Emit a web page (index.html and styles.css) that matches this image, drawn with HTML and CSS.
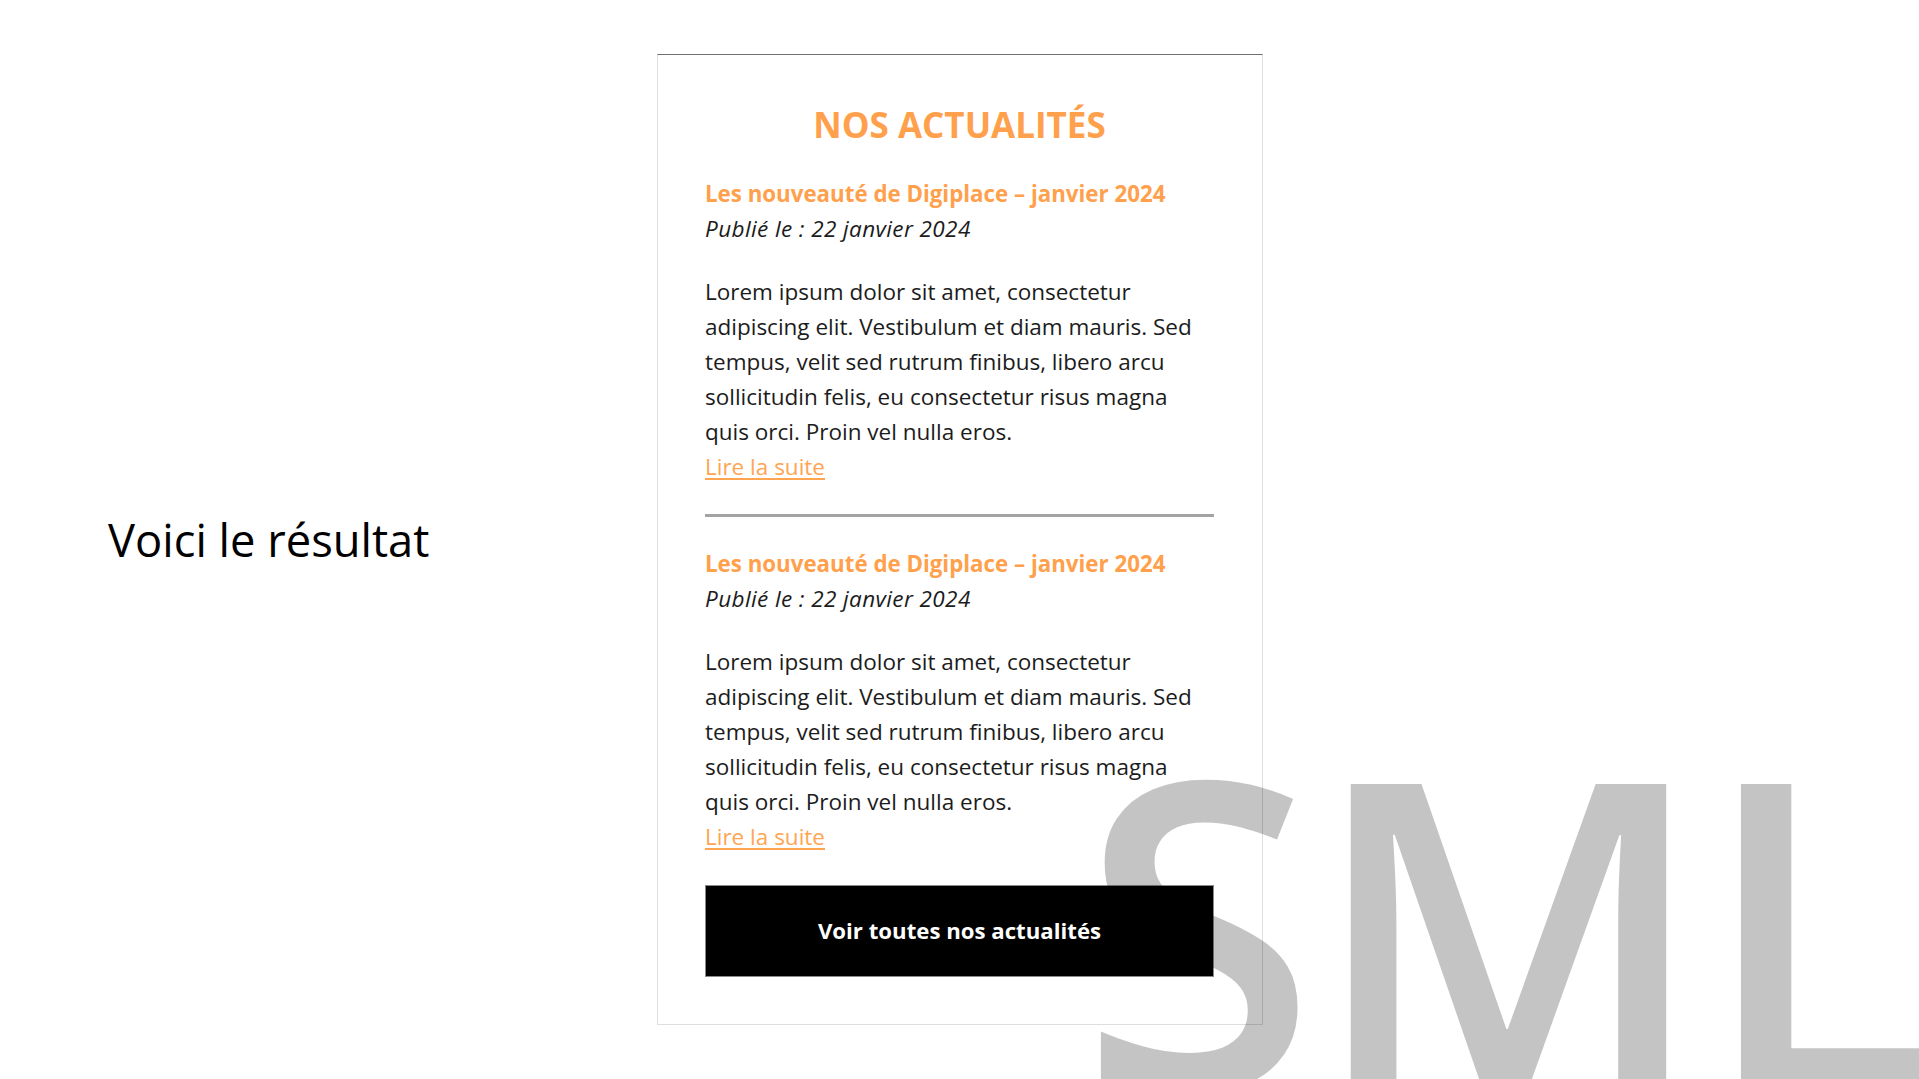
FILE: index.html
```html
<!DOCTYPE html>
<html lang="fr">
<head>
<meta charset="utf-8">
<title>Nos actualités</title>
<link rel="stylesheet" href="styles.css">
</head>
<body>
<div class="slide">
  <p class="caption">Voici le résultat</p>
  <section class="card">
    <h2 class="card-title">NOS ACTUALITÉS</h2>
    <article class="post">
      <h3 class="post-title">Les nouveauté de Digiplace – janvier 2024</h3>
      <p class="post-date">Publié le : 22 janvier 2024</p>
      <p class="post-body">Lorem ipsum dolor sit amet, consectetur adipiscing elit. Vestibulum et diam mauris. Sed tempus, velit sed rutrum finibus, libero arcu sollicitudin felis, eu consectetur risus magna quis orci. Proin vel nulla eros.</p>
      <a class="post-link" href="#">Lire la suite</a>
    </article>
    <hr class="divider">
    <article class="post">
      <h3 class="post-title">Les nouveauté de Digiplace – janvier 2024</h3>
      <p class="post-date">Publié le : 22 janvier 2024</p>
      <p class="post-body">Lorem ipsum dolor sit amet, consectetur adipiscing elit. Vestibulum et diam mauris. Sed tempus, velit sed rutrum finibus, libero arcu sollicitudin felis, eu consectetur risus magna quis orci. Proin vel nulla eros.</p>
      <a class="post-link" href="#">Lire la suite</a>
    </article>
    <a class="all-btn" href="#">Voir toutes nos actualités</a>
  </section>
</div>
<div class="watermark" aria-hidden="true">SML</div>
</body>
</html>
```
FILE: styles.css
```css
html, body {
  margin: 0;
  padding: 0;
  background: #ffffff;
}
body {
  width: 1919px;
  height: 1079px;
  overflow: hidden;
  position: relative;
}
.slide {
  display: flex;
  align-items: center;
  height: 1079px;
  padding-left: 108px;
  box-sizing: border-box;
}
.caption {
  width: 549px;
  flex: none;
  margin: 0;
  font-family: "Open Sans", sans-serif;
  font-size: 45.3px;
  line-height: 60px;
  color: #000;
}
.card {
  flex: none;
  width: 606px;
  box-sizing: border-box;
  border: 1px solid #dedede;
  border-top-color: #707070;
  padding: 50px 48px 47px 47px;
  font-family: "Open Sans", sans-serif;
  color: #1c1c1c;
}
.card-title {
  margin: 0 0 31px;
  text-align: center;
  font-size: 35px;
  line-height: 40px;
  font-weight: 700;
  color: #ffa04c;
}
.post {
  display: flex;
  flex-direction: column;
  align-items: flex-start;
}
.post-title {
  margin: 0;
  font-size: 22.3px;
  line-height: 35px;
  font-weight: 700;
  color: #ffa04c;
}
.post-date {
  margin: 0 0 28px;
  font-size: 22.5px;
  line-height: 35px;
  font-style: italic;
  letter-spacing: 0.4px;
}
.post-body {
  margin: 0;
  padding-right: 12px;
  font-size: 22.5px;
  line-height: 35px;
}
.post-link {
  font-size: 22.5px;
  line-height: 35px;
  color: #ffa552;
  text-decoration: underline;
  text-underline-offset: 3px;
}
.divider {
  margin: 30px 0 28.5px;
  border: 0;
  height: 3px;
  background: #a3a3a3;
}
.all-btn {
  display: flex;
  align-items: center;
  justify-content: center;
  margin-top: 31px;
  height: 92px;
  box-sizing: border-box;
  border: 1px solid #8a8a8a;
  background: #000;
  color: #fff;
  font-size: 22.2px;
  font-weight: 700;
  text-decoration: none;
}
.watermark {
  position: absolute;
  left: 1080px;
  top: 709px;
  font-family: "Open Sans", sans-serif;
  font-weight: 600;
  font-size: 430px;
  line-height: 1;
  letter-spacing: -6px;
  color: rgba(0, 0, 0, 0.23);
  white-space: nowrap;
  pointer-events: none;
}
```
